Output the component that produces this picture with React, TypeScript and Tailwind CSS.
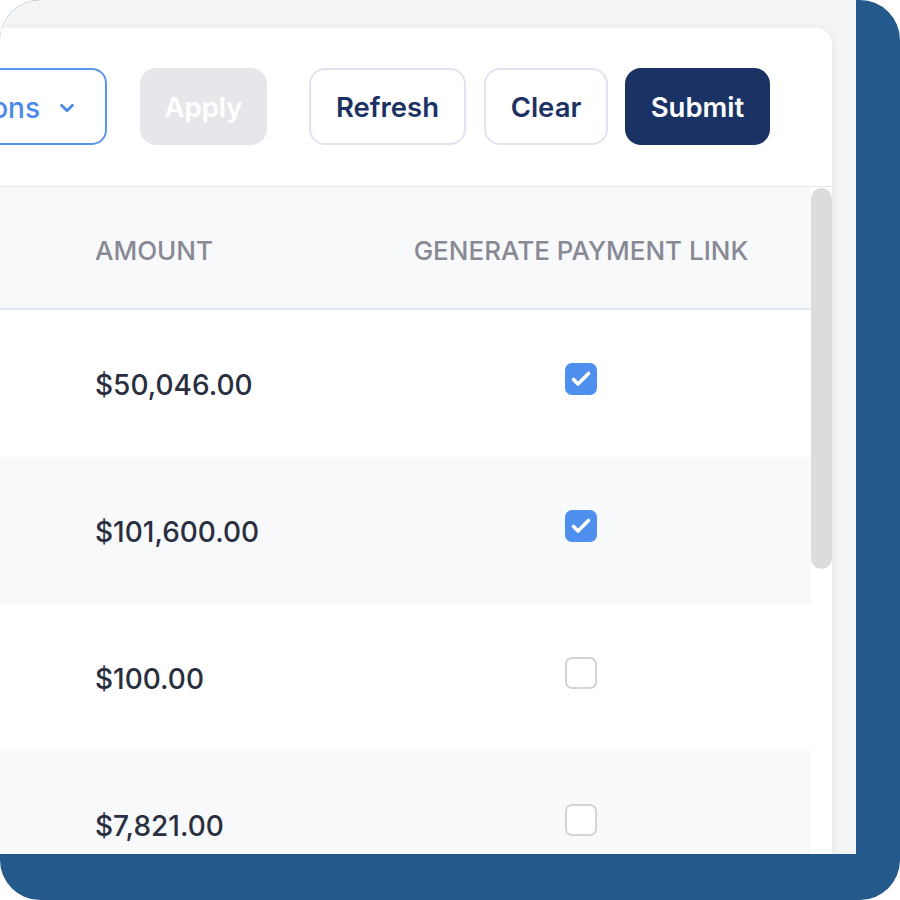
import { ChevronDown } from "lucide-react";

const rows = [
  { amount: "$50,046.00", link: true },
  { amount: "$101,600.00", link: true },
  { amount: "$100.00", link: false },
  { amount: "$7,821.00", link: false },
];

function Checkbox({ checked }: { checked: boolean }) {
  if (!checked) {
    return <div className="w-[32px] h-[32px] rounded-[7px] border-2 border-[#d4d4d6] bg-white" />;
  }
  return (
    <div className="w-[32px] h-[32px] rounded-[7px] bg-[#4f8fee] flex items-center justify-center">
      <svg width="32" height="32" viewBox="0 0 32 32" fill="none">
        <polyline points="8.5,16.5 13,21 23.5,10.5" stroke="white" strokeWidth="3.6" strokeLinecap="round" strokeLinejoin="round" />
      </svg>
    </div>
  );
}

export default function App() {
  return (
    <div className="w-[900px] h-[900px] bg-white" style={{ fontFamily: "Inter, 'Noto Sans', sans-serif" }}>
      <div className="w-full h-full rounded-[40px] bg-[#23598b] overflow-hidden">
        <div className="w-[856px] h-[854px] bg-[#f4f5f7] pt-[28px] overflow-hidden">
          <div className="w-[832px] h-[900px] bg-white rounded-tr-[16px] shadow-[2px_0_8px_rgba(0,0,0,0.05)] flex flex-col">
            {/* toolbar */}
            <div className="flex items-center justify-end pt-[40px] pb-[41px] pr-[62px] border-b border-[#e0e6ef]">
              <button className="h-[77px] w-[160px] -ml-[60px] flex items-center justify-end gap-[16px] pr-[27px] pt-[3px] rounded-[15px] border-2 border-[#5b96ec] text-[#4a8bea] text-[28px] font-medium">
                <span>ons</span>
                <ChevronDown size={22} strokeWidth={3} />
              </button>
              <button className="ml-[33px] h-[77px] w-[127px] pt-[3px] rounded-[16px] bg-[#e6e7ea] text-white text-[27.5px] font-semibold">
                Apply
              </button>
              <button className="ml-[42px] h-[77px] w-[157px] pt-[3px] rounded-[16px] border-2 border-[#dfe4ee] text-[#1b3262] text-[27.5px] font-semibold">
                Refresh
              </button>
              <button className="ml-[18px] h-[77px] w-[124px] pt-[3px] rounded-[16px] border-2 border-[#dfe4ee] text-[#1b3262] text-[27.5px] font-semibold">
                Clear
              </button>
              <button className="ml-[17px] h-[77px] w-[145px] pt-[3px] rounded-[16px] bg-[#1b3264] text-white text-[27.5px] font-semibold">
                Submit
              </button>
            </div>

            {/* table */}
            <div className="flex">
              <div className="w-[811px]">
                <div className="h-[123px] pt-[5px] bg-[#f8f9fb] border-b-2 border-[#e3e9f2] grid grid-cols-[412px_338px_1fr] items-center text-[#888994] text-[26px] font-medium">
                  <div className="pl-[95px]">AMOUNT</div>
                  <div className="text-center whitespace-nowrap">GENERATE PAYMENT LINK</div>
                  <div />
                </div>
                {rows.map((r, i) => (
                  <div
                    key={i}
                    className={`h-[147px] grid grid-cols-[412px_338px_1fr] ${i % 2 === 1 ? "bg-[#f8f9fb]" : "bg-white"}`}
                  >
                    <div className="pl-[95px] pt-[2px] flex items-center text-[28px] font-medium text-[#2a2f40]">{r.amount}</div>
                    <div className="flex justify-center items-center pb-[10px]">
                      <Checkbox checked={r.link} />
                    </div>
                    <div />
                  </div>
                ))}
              </div>
              <div className="w-[21px] pt-[1px]">
                <div className="w-[21px] h-[381px] rounded-full bg-[#dcdcdc]" />
              </div>
            </div>
          </div>
        </div>
      </div>
    </div>
  );
}
